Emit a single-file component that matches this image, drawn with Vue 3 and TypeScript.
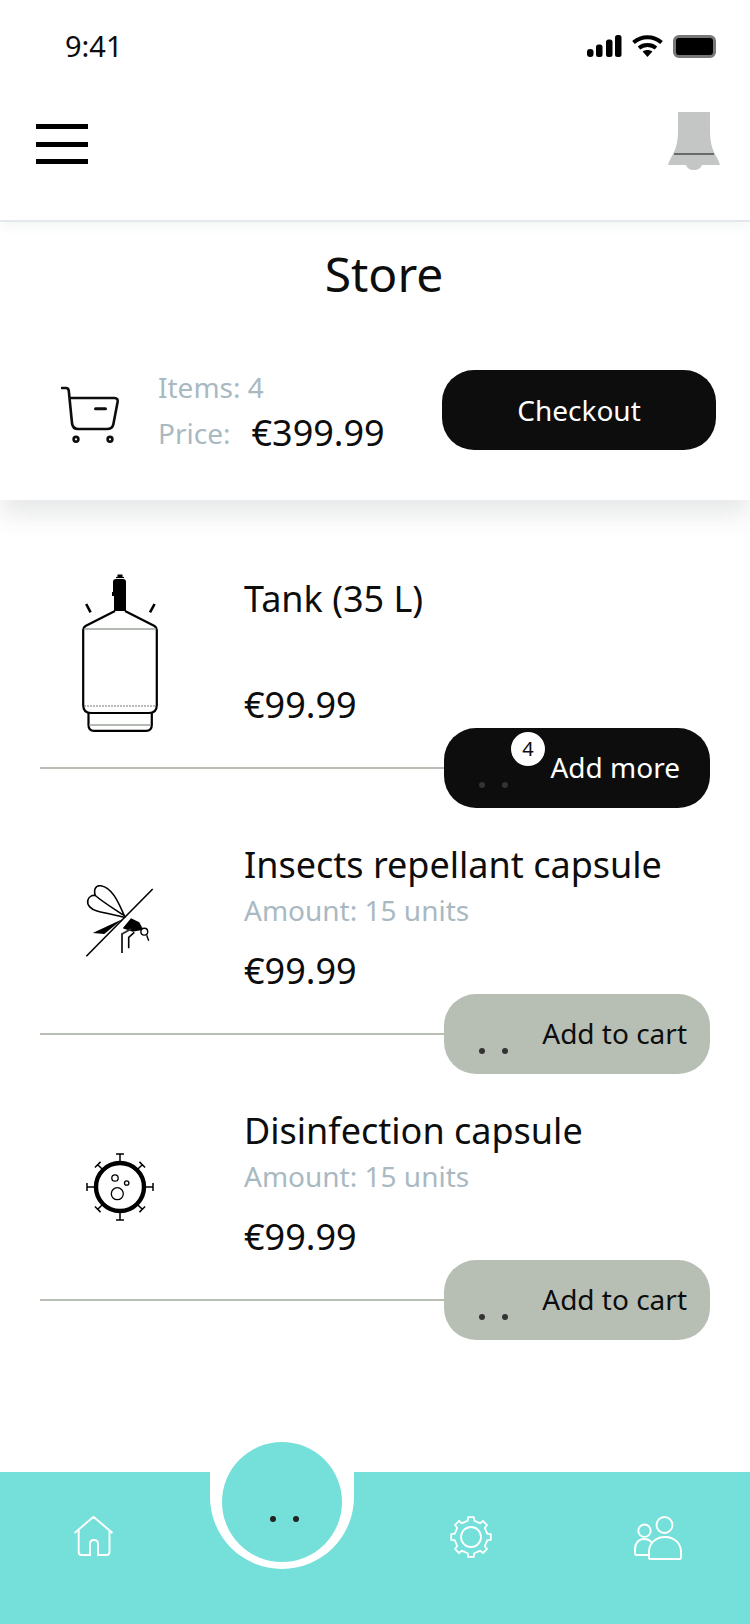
<script setup lang="ts">
interface Product {
  name: string
  amount?: string
  icon: 'tank' | 'insect' | 'virus'
  inCart?: number
}

const products: Product[] = [
  { name: 'Tank (35 L)', icon: 'tank', inCart: 4 },
  { name: 'Insects repellant capsule', amount: 'Amount: 15 units', icon: 'insect' },
  { name: 'Disinfection capsule', amount: 'Amount: 15 units', icon: 'virus' }
]

const spikes = [0, 45, 90, 135, 180, 225, 270, 315]

// 8 tooth gear outline around 21,21
function gearPath(): string {
  const cx = 21
  const cy = 21
  const pts: string[] = []
  for (let i = 0; i < 8; i++) {
    const a = (i * Math.PI) / 4 - Math.PI / 2
    const steps: [number, number][] = [
      [16.2, -0.39],
      [16.6, -0.2],
      [20, -0.14],
      [20, 0.14],
      [16.6, 0.2],
      [16.2, 0.39]
    ]
    for (const [r, d] of steps) {
      const x = cx + r * Math.cos(a + d)
      const y = cy + r * Math.sin(a + d)
      pts.push(`${x.toFixed(2)} ${y.toFixed(2)}`)
    }
  }
  return 'M' + pts.join('L') + 'Z'
}

const gear = gearPath()
</script>

<template>
  <div class="page">
    <div class="status-bar">
      <span class="time">9:41</span>
      <div class="status-icons">
        <svg width="35" height="22" viewBox="0 0 35 22" fill="#000">
          <rect x="0" y="14" width="6.5" height="8" rx="3" />
          <rect x="9" y="9.5" width="6.5" height="12.5" rx="2.5" />
          <rect x="19" y="4.5" width="6.5" height="17.5" rx="2.5" />
          <rect x="28" y="0" width="6.5" height="22" rx="2.5" />
        </svg>
        <svg width="31" height="22" viewBox="0 0 31 22" fill="none" stroke="#000" stroke-width="4">
          <path d="M1.5 7.5C9.5 0.5 21.5 0.5 29.5 7.5" />
          <path d="M7 13C11.8 9 19.2 9 24 13" />
          <path d="M15.5 22L10.6 16.6C13.4 14.6 17.6 14.6 20.4 16.6Z" fill="#000" stroke="none" />
        </svg>
        <div class="battery"></div>
      </div>
    </div>

    <header class="top-bar">
      <div class="hamburger"><span></span><span></span><span></span></div>
      <svg class="bell" width="52" height="58" viewBox="0 0 52 58">
        <path
          fill="#c4c6c5"
          d="M10 0H42V18C42 30 44 36 47 42C49 46 51 49 52 53H34C33 56 30 58 26 58C22 58 19 56 18 53H0C1 49 3 46 5 42C8 36 10 30 10 18Z"
        />
        <rect x="6" y="41" width="40" height="2" fill="#666a68" />
      </svg>
    </header>

    <section class="store">
      <h1 class="store-title">Store</h1>
      <div class="cart-row">
        <svg class="cart-icon" width="60" height="66" viewBox="0 -10 60 66" fill="none" stroke="#0d0d0d" stroke-width="2.6" stroke-linecap="round">
          <path d="M0.8 1H5Q7.5 1 7.8 4L11 36Q11.6 42 17 42H46Q51.6 42 52.4 37L56.6 15Q57.2 11 53.5 11H9" />
          <path d="M34.5 21.7H44.5" stroke-width="3" />
          <circle cx="15" cy="52.3" r="2.4" />
          <circle cx="49" cy="52.3" r="2.4" />
        </svg>
        <div class="cart-summary">
          <div class="muted">Items: 4</div>
          <div class="price-line"><span class="muted">Price:</span><span class="cart-total">€399.99</span></div>
        </div>
        <button class="checkout">Checkout</button>
      </div>
    </section>

    <main class="products">
      <article v-for="p in products" :key="p.name" class="product">
        <div class="product-top">
          <div class="product-icon">
            <svg v-if="p.icon === 'tank'" width="76" height="162" viewBox="0 0 76 162" fill="none" stroke="#000">
              <path d="M33 37L3.5 52Q1.2 53.5 1.2 56V131Q1.2 139 9 139H67Q74.8 139 74.8 131V56Q74.8 53.5 72.5 52L43 37" stroke-width="2.2" />
              <path d="M6.5 139V151Q6.5 156.8 12 156.8H64Q69.8 156.8 69.8 151V139" stroke-width="2.2" />
              <path d="M2 55H74" stroke="#9aa39b" stroke-width="1.4" />
              <path d="M2 132H74" stroke="#777" stroke-width="1" stroke-dasharray="2 1" />
              <path d="M7 151H69" stroke="#9aa39b" stroke-width="1.4" />
              <path d="M31 8Q31 5 34 5H41Q44 5 44 8V37H32V22H30V18H31Z" fill="#000" stroke="none" />
              <path d="M34 3.5H42" stroke-width="1.2" />
              <rect x="35.5" y="0.5" width="5" height="3" fill="#000" stroke="none" />
              <path d="M4.2 30L8.6 38.4M72.6 30L68 38.4" stroke-width="2.6" />
            </svg>
            <svg v-else-if="p.icon === 'insect'" width="68" height="72" viewBox="0 0 68 72" fill="none" stroke="#000">
              <path d="M0.3 71.3L66.7 4" stroke-width="1.6" />
              <path d="M38.3 30.7C33 19 27 3 15 0.8C9 0 7.6 5 9.3 10.5C18 18 30 25 38.3 30.7Z" stroke-width="1.6" fill="#fff" />
              <path d="M38.3 32.3C30 30 20 28.5 11 26C5 24.5 0.8 20 1.8 15.5C2.6 11.5 6 10 9.3 10.5" stroke-width="1.6" />
              <path d="M6.7 48L36.7 34L18.3 49Z" fill="#000" stroke="none" />
              <path d="M36.7 43.3L45 33.3L53.3 37.3L57.3 44.7L46.7 46.7Z" fill="#000" stroke="none" />
              <circle cx="58.3" cy="46.7" r="3.4" stroke-width="1.4" fill="#fff" />
              <path d="M60.7 50.2L62.7 55.7" stroke-width="1.4" />
              <path d="M45 44L36 49V68" stroke-width="2" stroke="#333" />
              <path d="M48.3 47.3L42.7 52.3V63.3" stroke-width="1.6" />
            </svg>
            <svg v-else width="68" height="68" viewBox="0 0 68 68" fill="none" stroke="#000">
              <g v-for="a in spikes" :key="a" :transform="`rotate(${a} 34 34)`">
                <path :d="a % 90 === 0 ? 'M34 9V1M30 1H38' : 'M34 9V2.5M30 2.5H38'" stroke-width="1.5" />
              </g>
              <circle cx="34" cy="34" r="24" stroke-width="4.4" fill="#fff" />
              <circle cx="29" cy="25" r="3.2" stroke-width="1.3" />
              <circle cx="40.7" cy="30" r="2.2" stroke-width="1.3" />
              <circle cx="31.3" cy="40.7" r="6" stroke-width="1.3" />
            </svg>
          </div>
          <div class="product-info">
            <div class="product-name">{{ p.name }}</div>
            <div v-if="p.amount" class="muted">{{ p.amount }}</div>
            <div class="product-price">€99.99</div>
          </div>
        </div>
        <div class="product-foot">
          <div class="rule"></div>
          <button class="cart-btn" :class="p.inCart ? 'cart-btn-active' : ''">
            <span class="dot dot-a"></span>
            <span class="dot dot-b"></span>
            <span v-if="p.inCart" class="badge">{{ p.inCart }}</span>
            <span class="cart-label">{{ p.inCart ? 'Add more' : 'Add to cart' }}</span>
          </button>
        </div>
      </article>
    </main>

    <nav class="tabs">
      <div class="tab">
        <svg width="40" height="40" viewBox="0 0 40 40" fill="none" stroke="#fff" stroke-width="1.9">
          <path d="M0.5 17L19.5 0.8L38.5 17M4.7 13.5V36Q4.7 39 7.5 39H16V28Q16 24 20 24Q24 24 24 28V39H32.5Q35.5 39 35.5 36V13.5" />
        </svg>
      </div>
      <div class="tab">
        <div class="notch"></div>
        <div class="fab"><span></span><span></span></div>
      </div>
      <div class="tab">
        <svg width="42" height="42" viewBox="0 0 42 42" fill="none" stroke="#fff" stroke-width="1.8">
          <path :d="gear" />
          <circle cx="21" cy="21" r="10" />
        </svg>
      </div>
      <div class="tab tab-people">
        <svg width="48" height="44" viewBox="0 0 48 44" fill="none" stroke="#fff" stroke-width="1.9">
          <circle cx="30.5" cy="9" r="8" />
          <circle cx="10.5" cy="14.7" r="6.2" />
          <path d="M15 39H2.5Q1 39 1 37V33C1 27 5 23 10 23C13 23 16 24 18 27" />
          <path d="M16 43H45.5Q47 43 47 41V36C47 27 40 21 31 21C22 21 15 27 15 36V42Q15 43 16 43Z" />
        </svg>
      </div>
    </nav>
  </div>
</template>

<style>
html,
body {
  margin: 0;
  background: #fff;
}
</style>

<style scoped>
.page {
  width: 750px;
  height: 1624px;
  display: flex;
  flex-direction: column;
  overflow: hidden;
  background: #fff;
  font-family: "Noto Sans", sans-serif;
  color: #0d0d0d;
}

.status-bar {
  height: 80px;
  flex: none;
  display: flex;
  justify-content: space-between;
  padding: 26px 34px 0 65px;
  box-sizing: border-box;
}

.time {
  font-size: 29px;
  line-height: 40px;
}

.status-icons {
  display: flex;
  gap: 10px;
  padding-top: 9px;
  align-items: flex-start;
}

.battery {
  width: 43px;
  height: 23px;
  box-sizing: border-box;
  background: #000;
  border: 3px solid #777;
  border-radius: 6px;
}

.top-bar {
  height: 142px;
  flex: none;
  box-sizing: border-box;
  display: flex;
  justify-content: space-between;
  align-items: flex-start;
  padding: 32px 30px 0 36px;
  border-bottom: 2px solid #e2e8ed;
  background: #fff;
  position: relative;
  z-index: 2;
  box-shadow: 0 8px 10px -2px rgba(60, 70, 80, 0.05);
}

.hamburger {
  width: 52px;
  height: 40px;
  margin-top: 12px;
  display: flex;
  flex-direction: column;
  justify-content: space-between;
}

.hamburger span {
  height: 5px;
  background: #000;
}

.store {
  flex: none;
  height: 278px;
  box-sizing: border-box;
  padding-top: 20px;
  background: #fff;
  position: relative;
  z-index: 1;
  box-shadow: 0 14px 24px rgba(60, 70, 80, 0.13);
}

.store-title {
  margin: 0;
  padding-left: 18px;
  font-size: 48px;
  line-height: 64px;
  font-weight: 400;
  text-align: center;
}

.cart-row {
  margin-top: 58px;
  display: flex;
  align-items: center;
  padding: 0 34px 0 61px;
}

.cart-icon {
  flex: none;
}

.cart-summary {
  margin-left: 37px;
  flex: 1;
}

.muted {
  font-size: 28px;
  line-height: 46px;
  color: #a9b9c2;
}

.price-line {
  display: flex;
  align-items: center;
  gap: 21px;
  height: 45px;
}

.cart-total {
  font-size: 36px;
  line-height: 45px;
}

.checkout {
  width: 274px;
  height: 80px;
  border: 0;
  border-radius: 32px;
  background: #0d0d0d;
  color: #fff;
  font: 28px "Noto Sans", sans-serif;
}

.products {
  padding-top: 42px;
}

.product {
  height: 266px;
  display: flex;
  flex-direction: column;
  padding: 0 40px;
}

.product-top {
  height: 186px;
  display: flex;
}

.product-icon {
  width: 160px;
  box-sizing: border-box;
  padding-top: 40px;
  display: flex;
  align-items: center;
  justify-content: center;
  flex: none;
}

.product-info {
  margin-left: 44px;
  padding: 34px 0 0;
  display: flex;
  flex-direction: column;
  box-sizing: border-box;
  height: 186px;
}

.product-name {
  font-size: 36px;
  line-height: 46px;
}

.product-info .muted {
  line-height: 44px;
}

.product-price {
  font-size: 36px;
  line-height: 46px;
  margin-top: auto;
}

.product-foot {
  height: 80px;
  display: flex;
  align-items: center;
}

.rule {
  flex: 1;
  height: 2px;
  background: #b7bfb5;
}

.cart-btn {
  position: relative;
  width: 266px;
  height: 80px;
  flex: none;
  border: 0;
  border-radius: 32px;
  background: #b7bfb5;
  color: #0d0d0d;
  font: 28px "Noto Sans", sans-serif;
  text-align: right;
  padding: 0 23px 2px 0;
}

.cart-btn-active {
  background: #0d0d0d;
  color: #fff;
  padding-right: 30px;
}

.dot {
  position: absolute;
  top: 54px;
  width: 6px;
  height: 6px;
  border-radius: 50%;
  background: #333;
}

.dot-a {
  left: 35px;
}

.dot-b {
  left: 58px;
}

.badge {
  position: absolute;
  left: 67px;
  top: 4px;
  width: 34px;
  height: 34px;
  border-radius: 50%;
  background: #fff;
  color: #0d0d0d;
  font-size: 20px;
  line-height: 34px;
  text-align: center;
}

.tabs {
  margin-top: auto;
  height: 152px;
  flex: none;
  background: #75e0da;
  display: grid;
  grid-template-columns: repeat(4, 188.5px);
  padding-top: 44px;
  box-sizing: border-box;
}

.tab {
  position: relative;
  display: flex;
  justify-content: center;
  align-items: flex-start;
}

.tab-people {
  padding-right: 4px;
}

.notch {
  position: absolute;
  left: 21px;
  top: -44px;
  width: 144px;
  height: 97px;
  background: #fff;
  border-radius: 0 0 72px 72px;
}

.fab {
  position: absolute;
  left: 33px;
  top: -74px;
  width: 120px;
  height: 120px;
  border-radius: 50%;
  background: #75e0da;
}

.fab span {
  position: absolute;
  top: 74px;
  width: 6px;
  height: 6px;
  border-radius: 50%;
  background: #222;
  left: 48px;
}

.fab span + span {
  left: 71px;
}
</style>
